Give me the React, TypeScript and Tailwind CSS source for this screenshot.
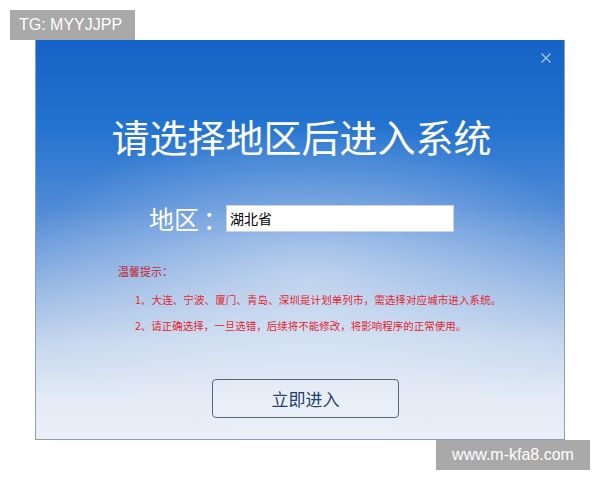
import React from "react";

const cjk = "font-['Noto_Sans_CJK_SC','Noto_Sans',sans-serif]";

export default function App() {
  return (
    <div className={`relative w-[600px] h-[480px] bg-white overflow-hidden ${cjk}`}>
      {/* watermark top */}
      <div className="absolute left-[10px] top-[10px] w-[125px] h-[30px] bg-[#a9a9a9] text-white text-[16px] leading-[30px] pl-[9px] font-['Liberation_Sans',Arial,sans-serif]">
        TG: MYYJJPP
      </div>

      {/* dialog */}
      <div className="ml-[35px] mt-[40px] w-[530px] h-[400px] relative border border-[#8aa0b8] border-t-0 bg-[image:radial-gradient(ellipse_55%_40%_at_52%_60%,rgba(255,255,255,0.45),rgba(255,255,255,0)),linear-gradient(to_bottom,#1563c6_0%,#2373d0_22%,#4f8ad6_42%,#8fb2e2_60%,#c6d7ee_76%,#e4ebf6_90%,#eaeff7_100%)]">
        <button className="absolute right-[12px] top-[12px] w-[12px] h-[12px] text-[#a9c8ee]">
          <svg width="12" height="12" viewBox="0 0 12 12" fill="none" stroke="currentColor" strokeWidth="1.2">
            <path d="M1.5 1.5l9 9M10.5 1.5l-9 9" />
          </svg>
        </button>

        <div className="flex flex-col">
          <h1 className="pt-[77px] text-center text-white text-[38px] leading-[38px] font-normal pl-[3px]">
            请选择地区后进入系统
          </h1>

          <div className="mt-[50px] pl-[113px] flex items-center h-[27px]">
            <span className="text-white text-[25px] leading-[27px]">地区</span>
            <span className="text-white text-[25px] leading-[27px] ml-[4px] w-[22px]">：</span>
            <div className="ml-[1px] w-[228px] h-[27px] bg-white border border-[#c8d4e2] pl-[3px] text-[14px] leading-[25px] text-black">
              湖北省
            </div>
          </div>

          <p className="mt-[33px] pl-[82px] text-[#c22630] text-[11px] leading-[12px]">温馨提示：</p>
          <p className="mt-[17px] pl-[99px] text-[#e2262e] text-[10.5px] leading-[12px] whitespace-nowrap tracking-[0.1px]">
            1、大连、宁波、厦门、青岛、深圳是计划单列市，需选择对应城市进入系统。
          </p>
          <p className="mt-[14px] pl-[99px] text-[#e2262e] text-[10.5px] leading-[12px] whitespace-nowrap">
            2、请正确选择，一旦选错，后续将不能修改，将影响程序的正常使用。
          </p>

          <div className="mt-[47px] pl-[176px]">
            <button className="w-[187px] h-[39px] rounded-[4px] border-[1.5px] border-[#56677a] bg-white/10 text-[#233f6c] text-[17px] leading-[36px]">
              立即进入
            </button>
          </div>
        </div>
      </div>

      {/* watermark bottom */}
      <div className="absolute left-[436px] top-[440px] w-[154px] h-[30px] bg-[#a9a9a9] text-white text-[16px] leading-[30px] text-center font-['Liberation_Sans',Arial,sans-serif]">
        www.m-kfa8.com
      </div>
    </div>
  );
}
